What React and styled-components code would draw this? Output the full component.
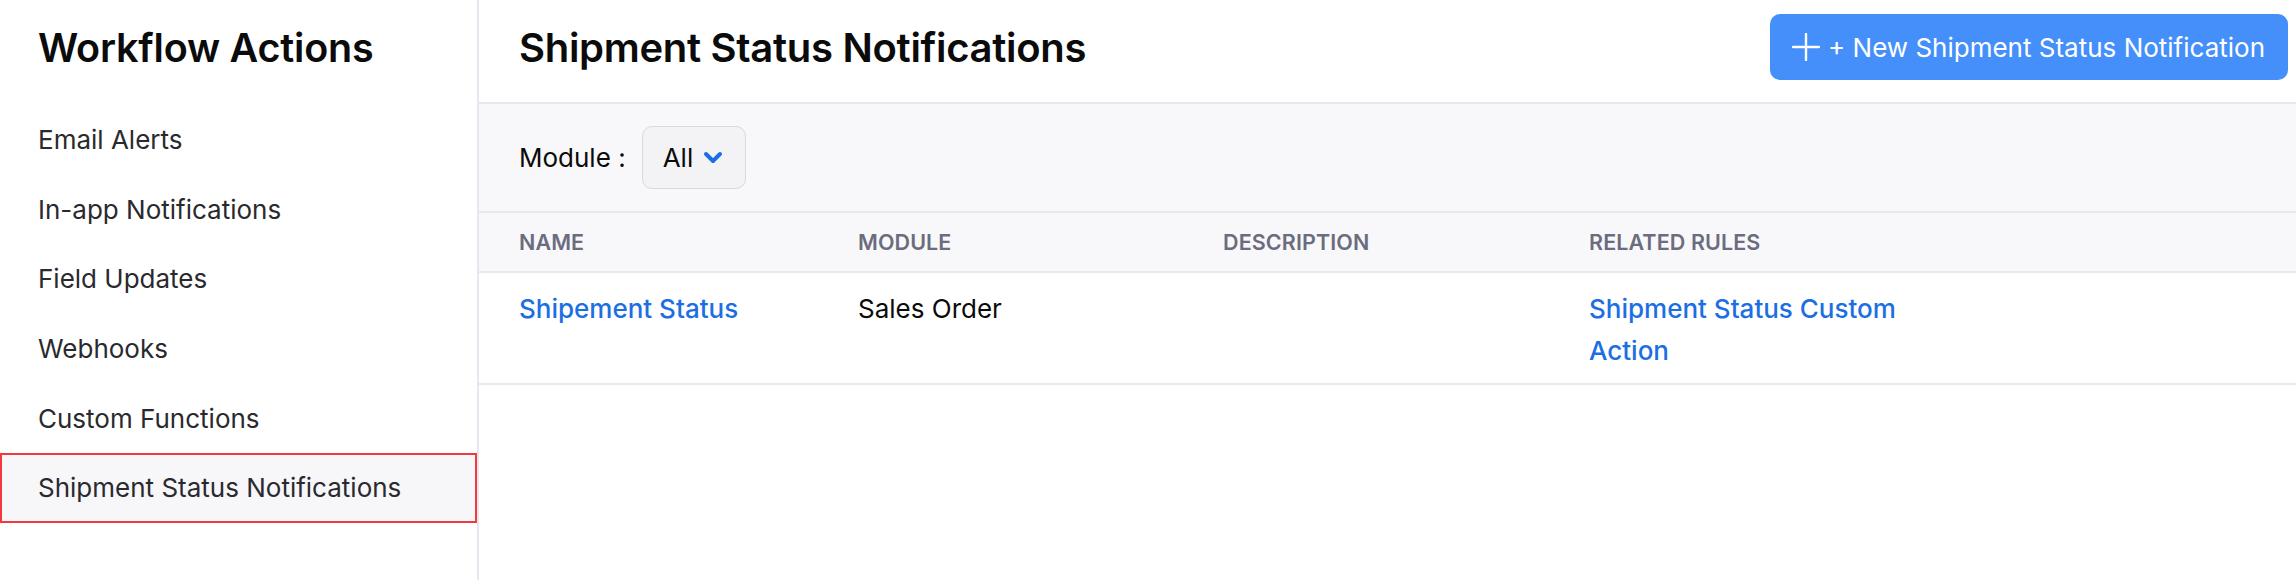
import React from 'react'
import styled, { createGlobalStyle } from 'styled-components'

const GlobalStyle = createGlobalStyle`
  html, body {
    margin: 0;
    padding: 0;
    background: #ffffff;
    font-family: Inter, "Noto Sans", "Liberation Sans", sans-serif;
  }
`

const Page = styled('div')`
  display: flex;
  height: 580px;
  width: 100%;
  overflow: hidden;
`

const Sidebar = styled('aside')`
  width: 477px;
  flex-shrink: 0;
  border-right: 2px solid #e7e7f0;
  display: flex;
  flex-direction: column;
`

const SidebarTitle = styled('h1')`
  margin: 24px 0 0 0;
  padding-left: 38px;
  height: 48px;
  line-height: 48px;
  font-size: 39.5px;
  font-weight: 600;
  color: #0b0b0b;
  letter-spacing: -0.2px;
`

const Menu = styled('nav')`
  display: flex;
  flex-direction: column;
  margin-top: 32.5px;
`

const MenuItem = styled('div')`
  height: 69.7px;
  display: flex;
  align-items: center;
  padding-left: 38px;
  font-size: 26px;
  color: #2a2a2e;
  background: ${props => props.active ? '#f7f7fa' : 'transparent'};
  outline: ${props => props.active ? '2.5px solid #f23a3e' : 'none'};
  outline-offset: -2.5px;
`

const Main = styled('main')`
  flex: 1;
  display: flex;
  flex-direction: column;
  min-width: 0;
`

const Header = styled('header')`
  height: 104px;
  box-sizing: border-box;
  padding: 0 8px 8px 40px;
  display: flex;
  align-items: center;
  justify-content: space-between;
  border-bottom: 2px solid #e6e6ef;
`

const Heading = styled('h2')`
  margin: 0;
  font-size: 40px;
  font-weight: 600;
  color: #0b0b0b;
  letter-spacing: -0.3px;
`

const PrimaryButton = styled('button')`
  height: 66px;
  padding: 0 23px 0 22px;
  display: flex;
  align-items: center;
  gap: 8px;
  border: 0;
  border-radius: 10px;
  background: #458ffa;
  color: #ffffff;
  font-family: inherit;
  font-size: 26px;
  font-weight: 400;
`

const FilterBar = styled('div')`
  height: 109px;
  box-sizing: border-box;
  padding-left: 40px;
  display: flex;
  align-items: center;
  gap: 16px;
  background: #f8f8fa;
  border-bottom: 2px solid #e8e8f1;
`

const FilterLabel = styled('span')`
  font-size: 26px;
  color: #0b0b0b;
`

const Select = styled('div')`
  width: 104px;
  height: 63px;
  box-sizing: border-box;
  padding-left: 20px;
  display: flex;
  align-items: center;
  gap: 10px;
  background: #f3f3f6;
  border: 1.5px solid #d6d8e4;
  border-radius: 10px;
  font-size: 26px;
  color: #0b0b0b;
`

const Row = styled('div')`
  display: grid;
  grid-template-columns: 339px 365px 366px 340px 1fr;
  padding-left: 40px;
  box-sizing: border-box;
  border-bottom: 2px solid #e8e8f1;
  background: ${props => props.head ? '#f8f8fa' : '#ffffff'};
  height: ${props => props.head ? '60px' : '112px'};
  align-items: ${props => props.head ? 'center' : 'start'};
`

const HeadCell = styled('div')`
  font-size: 21.5px;
  font-weight: 600;
  color: #6c6c7f;
  letter-spacing: 0.1px;
`

const Cell = styled('div')`
  padding-top: 15px;
  font-size: 26px;
  line-height: 42px;
  color: ${props => props.link ? '#1c6fe2' : '#0b0b0b'};
  font-weight: ${props => props.link ? 500 : 400};
`

const PlusIcon = () => (
  <svg width="28" height="28" viewBox="0 0 28 28" fill="none">
    <line x1="14" y1="1" x2="14" y2="27" stroke="#fff" strokeWidth="2.4" strokeLinecap="round" />
    <line x1="1" y1="14" x2="27" y2="14" stroke="#fff" strokeWidth="2.4" strokeLinecap="round" />
  </svg>
)

const Chevron = () => (
  <svg width="20" height="13" viewBox="0 0 20 13" fill="none">
    <path d="M3 3 L10 10 L17 3" stroke="#1a6fe5" strokeWidth="4" strokeLinecap="round" strokeLinejoin="round" />
  </svg>
)

const menu = [
  'Email Alerts',
  'In-app Notifications',
  'Field Updates',
  'Webhooks',
  'Custom Functions',
  'Shipment Status Notifications',
]

export default function App() {
  return (
    <Page>
      <GlobalStyle />
      <Sidebar>
        <SidebarTitle>Workflow Actions</SidebarTitle>
        <Menu>
          {menu.map((item, i) => (
            <MenuItem key={item} active={i === menu.length - 1}>{item}</MenuItem>
          ))}
        </Menu>
      </Sidebar>
      <Main>
        <Header>
          <Heading>Shipment Status Notifications</Heading>
          <PrimaryButton>
            <PlusIcon />
            + New Shipment Status Notification
          </PrimaryButton>
        </Header>
        <FilterBar>
          <FilterLabel>Module :</FilterLabel>
          <Select>
            All
            <Chevron />
          </Select>
        </FilterBar>
        <Row head>
          <HeadCell>NAME</HeadCell>
          <HeadCell>MODULE</HeadCell>
          <HeadCell>DESCRIPTION</HeadCell>
          <HeadCell>RELATED RULES</HeadCell>
        </Row>
        <Row>
          <Cell link>Shipement Status</Cell>
          <Cell>Sales Order</Cell>
          <Cell></Cell>
          <Cell link>Shipment Status Custom Action</Cell>
        </Row>
      </Main>
    </Page>
  )
}
